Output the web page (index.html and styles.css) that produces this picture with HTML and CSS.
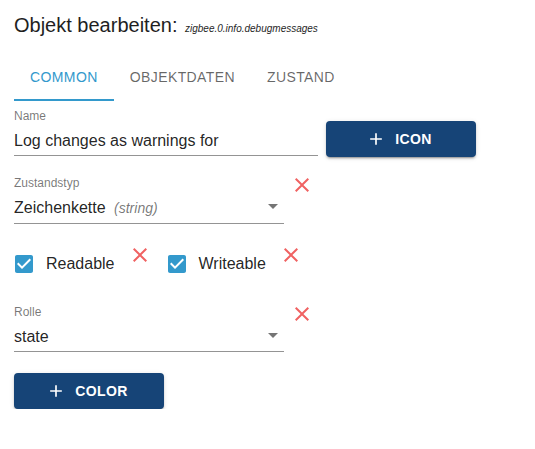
FILE: index.html
```html
<!DOCTYPE html>
<html lang="de">
<head>
    <meta charset="UTF-8">
    <meta name="viewport" content="width=device-width, initial-scale=1.0">
    <title>Objekt bearbeiten</title>
    <link rel="stylesheet" href="styles.css">
</head>
<body>

<div class="dialog">
    <h1 class="title">Objekt bearbeiten: <span class="obj-id">zigbee.0.info.debugmessages</span></h1>

    <div class="tabs">
        <div class="tab active">Common</div>
        <div class="tab">Objektdaten</div>
        <div class="tab">Zustand</div>
    </div>

    <div class="content">
        <div class="row row-name">
            <div class="field field-name">
                <div class="field-label">Name</div>
                <div class="field-input">Log changes as warnings for</div>
            </div>
            <button class="btn">
                <svg class="btn-icon" viewBox="0 0 24 24"><path d="M19 13h-6v6h-2v-6H5v-2h6V5h2v6h6v2z"/></svg>
                Icon
            </button>
        </div>

        <div class="row row-field">
            <div class="field field-select">
                <div class="field-label">Zustandstyp</div>
                <div class="field-input">
                    Zeichenkette <span class="hint">(string)</span>
                    <svg class="arrow" viewBox="0 0 24 24"><path d="M7 10l5 5 5-5z"/></svg>
                </div>
            </div>
            <svg class="remove" viewBox="0 0 24 24"><path d="M19 6.41 17.59 5 12 10.59 6.41 5 5 6.41 10.59 12 5 17.59 6.41 19 12 13.41 17.59 19 19 17.59 13.41 12z"/></svg>
        </div>

        <div class="row row-checks">
            <label class="check">
                <svg class="check-box" viewBox="0 0 24 24"><path d="M19 3H5c-1.11 0-2 .9-2 2v14c0 1.1.89 2 2 2h14c1.11 0 2-.9 2-2V5c0-1.1-.89-2-2-2zm-9 14-5-5 1.41-1.41L10 14.17l7.59-7.59L19 8l-9 9z"/></svg>
                Readable
            </label>
            <svg class="remove remove-check" viewBox="0 0 24 24"><path d="M19 6.41 17.59 5 12 10.59 6.41 5 5 6.41 10.59 12 5 17.59 6.41 19 12 13.41 17.59 19 19 17.59 13.41 12z"/></svg>
            <label class="check check-second">
                <svg class="check-box" viewBox="0 0 24 24"><path d="M19 3H5c-1.11 0-2 .9-2 2v14c0 1.1.89 2 2 2h14c1.11 0 2-.9 2-2V5c0-1.1-.89-2-2-2zm-9 14-5-5 1.41-1.41L10 14.17l7.59-7.59L19 8l-9 9z"/></svg>
                Writeable
            </label>
            <svg class="remove remove-check" viewBox="0 0 24 24"><path d="M19 6.41 17.59 5 12 10.59 6.41 5 5 6.41 10.59 12 5 17.59 6.41 19 12 13.41 17.59 19 19 17.59 13.41 12z"/></svg>
        </div>

        <div class="row row-field">
            <div class="field field-select">
                <div class="field-label">Rolle</div>
                <div class="field-input">
                    state
                    <svg class="arrow" viewBox="0 0 24 24"><path d="M7 10l5 5 5-5z"/></svg>
                </div>
            </div>
            <svg class="remove" viewBox="0 0 24 24"><path d="M19 6.41 17.59 5 12 10.59 6.41 5 5 6.41 10.59 12 5 17.59 6.41 19 12 13.41 17.59 19 19 17.59 13.41 12z"/></svg>
        </div>

        <div class="row row-color">
            <button class="btn">
                <svg class="btn-icon" viewBox="0 0 24 24"><path d="M19 13h-6v6h-2v-6H5v-2h6V5h2v6h6v2z"/></svg>
                Color
            </button>
        </div>
    </div>
</div>

</body>
</html>
```

FILE: styles.css
```css
body {
    margin: 0;
    font-family: 'Liberation Sans', Arial, Helvetica, sans-serif;
    background-color: #ffffff;
    color: rgba(0, 0, 0, 0.87);
}
.dialog {
    padding-top: 13px;
}
.title {
    margin: 0;
    padding: 0 14px;
    font-size: 20px;
    font-weight: normal;
    line-height: 24px;
    color: #1f1f1f;
}
.obj-id {
    margin-left: 2px;
    font-size: 10px;
    font-style: italic;
}
.tabs {
    display: flex;
    margin-top: 12px;
    padding-left: 14px;
    height: 48px;
}
.tab {
    display: flex;
    align-items: center;
    box-sizing: border-box;
    height: 48px;
    padding: 2px 16px 0;
    border-bottom: 2px solid transparent;
    font-size: 14px;
    letter-spacing: 0.4px;
    text-transform: uppercase;
    color: rgba(0, 0, 0, 0.6);
}
.tab.active {
    color: #3399cc;
    border-bottom-color: #3399cc;
}
.content {
    padding: 0 14px;
}
.row {
    display: flex;
    align-items: flex-start;
}
.row-name {
    margin-top: 8px;
    align-items: flex-end;
}
.row-field {
    margin-top: 20px;
}
.row-checks {
    margin-top: 19px;
}
.row-color {
    margin-top: 21px;
}
.field-label {
    font-size: 12px;
    line-height: 14px;
    color: rgba(0, 0, 0, 0.54);
}
.field-input {
    position: relative;
    margin-top: 8px;
    padding-bottom: 5px;
    border-bottom: 1px solid rgba(0, 0, 0, 0.42);
    font-size: 16px;
    line-height: 19px;
    white-space: nowrap;
}
.field-name {
    width: 304px;
}
.field-select {
    width: 270px;
}
.hint {
    margin-left: 4px;
    font-size: 14px;
    font-style: italic;
    color: rgba(0, 0, 0, 0.54);
}
.arrow {
    position: absolute;
    right: -1px;
    top: -4px;
    width: 24px;
    height: 24px;
    fill: rgba(0, 0, 0, 0.54);
}
.remove {
    width: 24px;
    height: 24px;
    margin-left: 6px;
    margin-top: -3px;
    fill: #f06262;
    flex-shrink: 0;
}
.remove-check {
    margin: 0 0 0 13px;
}
.check {
    display: flex;
    align-items: center;
    height: 42px;
    font-size: 16px;
}
.check-second {
    margin-left: 13px;
}
.check-box {
    width: 24px;
    height: 24px;
    margin-left: -2px;
    margin-right: 10px;
    fill: #3399cc;
}
.check-second .check-box {
    margin-left: 0;
}
.btn {
    display: flex;
    align-items: center;
    justify-content: center;
    width: 150px;
    height: 36px;
    margin-left: 8px;
    padding: 0;
    border: none;
    border-radius: 4px;
    background-color: #164477;
    color: #ffffff;
    font-family: inherit;
    font-size: 14px;
    font-weight: bold;
    letter-spacing: 0.4px;
    text-transform: uppercase;
    box-shadow: 0 3px 1px -2px rgba(0, 0, 0, 0.2), 0 2px 2px 0 rgba(0, 0, 0, 0.14), 0 1px 5px 0 rgba(0, 0, 0, 0.12);
    cursor: pointer;
}
.row-name .btn {
    margin-bottom: -1px;
}
.row-color .btn {
    margin-left: 0;
}
.btn-icon {
    width: 20px;
    height: 20px;
    margin-left: -4px;
    margin-right: 9px;
    fill: #ffffff;
}
```
